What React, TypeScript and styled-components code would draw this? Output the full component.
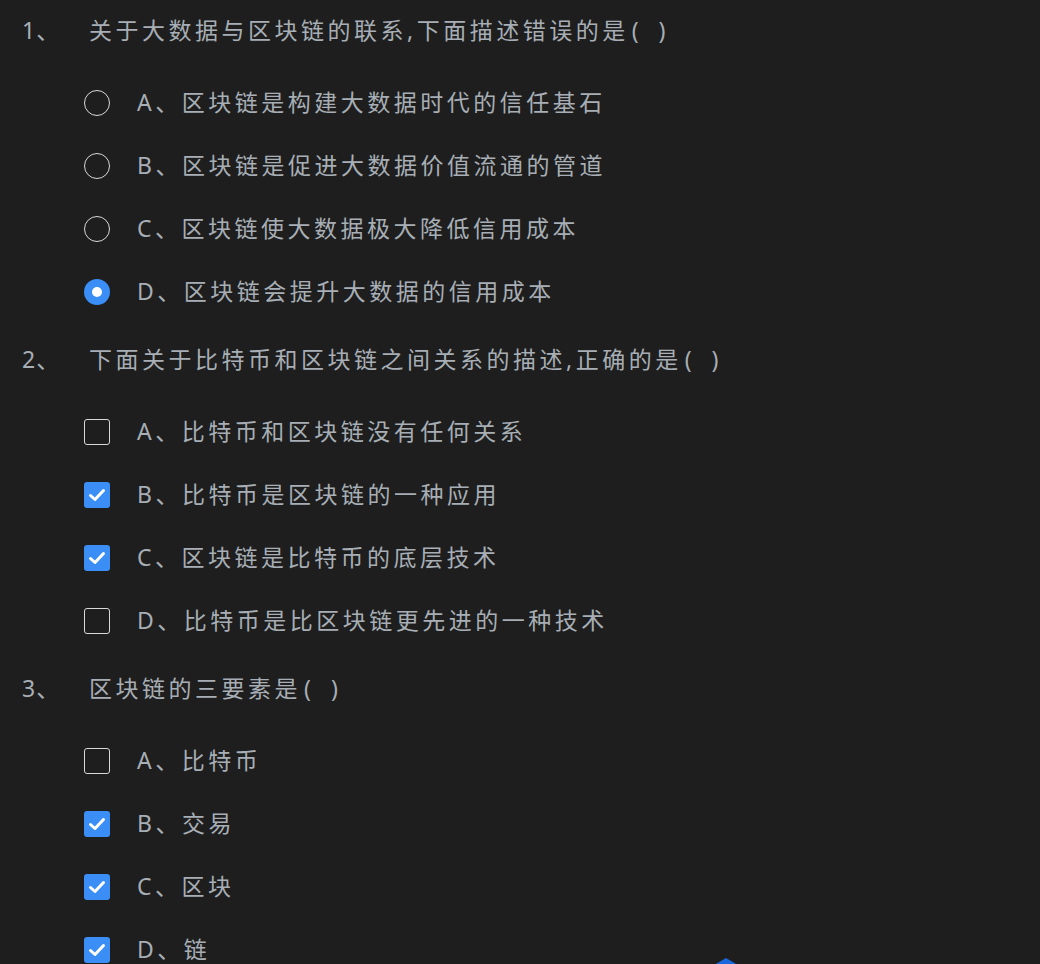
import React from "react";
import styled, { createGlobalStyle } from "styled-components";

const GlobalStyle = createGlobalStyle`
  html, body {
    margin: 0;
    padding: 0;
    background: #1e1e1e;
  }
  body {
    font-family: "Noto Sans", "Noto Sans CJK SC", sans-serif;
    overflow: hidden;
  }
`;

const Page = styled.div`
  width: 1040px;
  height: 964px;
  background: #1e1e1e;
  color: #a7aeb5;
  position: relative;
  overflow: hidden;
`;

const Question = styled.div`
  margin-bottom: 6px;
`;

const Title = styled.div`
  display: flex;
  align-items: center;
  height: 62px;
  font-size: 23px;
  letter-spacing: 3.5px;
`;

const Num = styled.span`
  width: 89px;
  padding-left: 22px;
  padding-bottom: 4px;
  box-sizing: border-box;
  flex-shrink: 0;
  letter-spacing: 1px;
`;

const TitleText = styled.span`
  padding-bottom: 4px;
`;

const Paren = styled.span`
  margin-left: 3px;
  letter-spacing: 7px;
`;

const Options = styled.div`
  margin-top: 9px;
  display: flex;
  flex-direction: column;
`;

const Option = styled.div`
  display: flex;
  align-items: center;
  height: 63px;
  padding-left: 84px;
  font-size: 23px;
  letter-spacing: 3.5px;
`;

const Radio = styled.span<{ $on?: boolean }>`
  width: 26px;
  height: 26px;
  box-sizing: border-box;
  border-radius: 50%;
  flex-shrink: 0;
  display: flex;
  align-items: center;
  justify-content: center;
  border: ${(p) => (p.$on ? "none" : "1.5px solid #d8d8d8")};
  background: ${(p) => (p.$on ? "#3a8ef6" : "transparent")};
  &::after {
    content: "";
    display: ${(p) => (p.$on ? "block" : "none")};
    width: 10px;
    height: 10px;
    border-radius: 50%;
    background: #fff;
  }
`;

const Box = styled.span<{ $on?: boolean }>`
  width: 26px;
  height: 26px;
  box-sizing: border-box;
  border-radius: 3px;
  flex-shrink: 0;
  display: flex;
  align-items: center;
  justify-content: center;
  border: ${(p) => (p.$on ? "none" : "1.5px solid #d8d8d8")};
  background: ${(p) => (p.$on ? "#3a8ef6" : "transparent")};
`;

const Label = styled.span`
  margin-left: 27px;
  padding-bottom: 4px;
`;

const FloatMark = styled.svg`
  position: absolute;
  left: 713px;
  top: 957px;
`;

type Q = { n: number; title: string; multi: boolean; opts: string[]; picked: number[] };

const questions: Q[] = [
  {
    n: 1,
    title: "关于大数据与区块链的联系,下面描述错误的是",
    multi: false,
    opts: ["A、区块链是构建大数据时代的信任基石", "B、区块链是促进大数据价值流通的管道", "C、区块链使大数据极大降低信用成本", "D、区块链会提升大数据的信用成本"],
    picked: [3],
  },
  {
    n: 2,
    title: "下面关于比特币和区块链之间关系的描述,正确的是",
    multi: true,
    opts: ["A、比特币和区块链没有任何关系", "B、比特币是区块链的一种应用", "C、区块链是比特币的底层技术", "D、比特币是比区块链更先进的一种技术"],
    picked: [1, 2],
  },
  {
    n: 3,
    title: "区块链的三要素是",
    multi: true,
    opts: ["A、比特币", "B、交易", "C、区块", "D、链"],
    picked: [1, 2, 3],
  },
];

const Check = () => (
  <svg width="20" height="20" viewBox="0 0 20 20">
    <polyline points="3.5,10.5 8,14.5 16.5,5.5" fill="none" stroke="#fff" strokeWidth="3" strokeLinecap="round" strokeLinejoin="round" />
  </svg>
);

const App = () => {
  return (
    <Page>
      <GlobalStyle />
      {questions.map((q) => (
        <Question key={q.n}>
          <Title>
            <Num>{q.n}、</Num>
            <TitleText>
              {q.title}
              <Paren>( )</Paren>
            </TitleText>
          </Title>
          <Options>
            {q.opts.map((o, i) => {
              const on = q.picked.includes(i);
              return (
                <Option key={o}>
                  {q.multi ? <Box $on={on}>{on && <Check />}</Box> : <Radio $on={on} />}
                  <Label>{o}</Label>
                </Option>
              );
            })}
          </Options>
        </Question>
      ))}
      <FloatMark width="26" height="30" viewBox="0 0 26 30">
        <polygon points="13,1 25,8 25,22 13,29 1,22 1,8" fill="#1a66dc" />
      </FloatMark>
    </Page>
  );
};

export default App;
